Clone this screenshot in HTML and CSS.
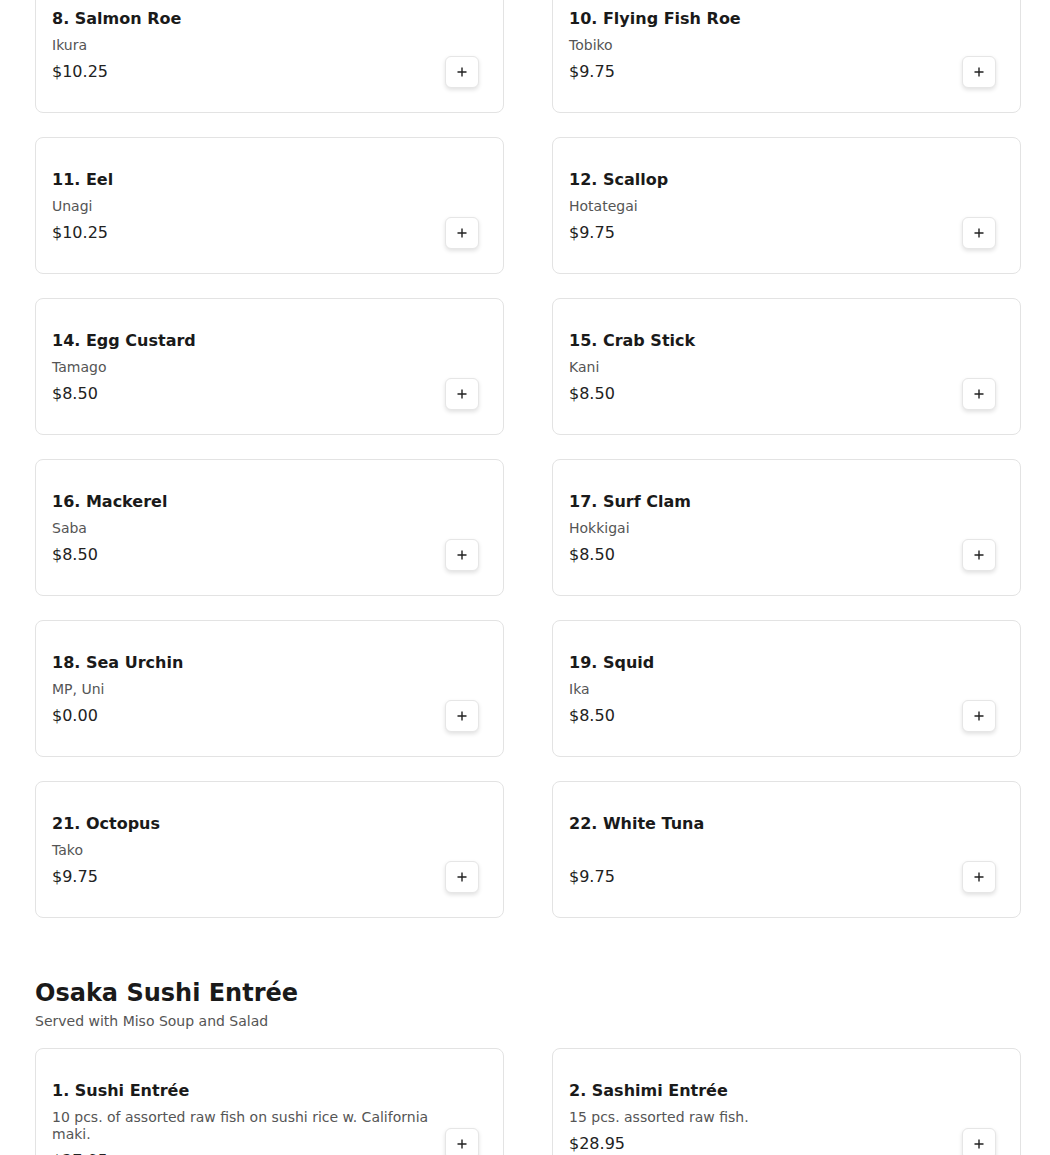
FILE: index.html
```html
<!DOCTYPE html>
<html lang="en">
<head>
<meta charset="utf-8">
<title>Menu</title>
<link rel="stylesheet" href="styles.css">
</head>
<body>
<main class="menu">
  <section class="section section-first">
    <div class="grid">
      <div class="card"><div class="info"><h3 class="name">8. Salmon Roe</h3><p class="desc">Ikura</p><p class="price">$10.25</p></div><button class="add" aria-label="Add"><svg viewBox="0 0 12 12" width="12" height="12"><path d="M6 1.5v9M1.5 6h9" stroke="#222" stroke-width="1.4"/></svg></button></div>
      <div class="card"><div class="info"><h3 class="name">10. Flying Fish Roe</h3><p class="desc">Tobiko</p><p class="price">$9.75</p></div><button class="add" aria-label="Add"><svg viewBox="0 0 12 12" width="12" height="12"><path d="M6 1.5v9M1.5 6h9" stroke="#222" stroke-width="1.4"/></svg></button></div>
      <div class="card"><div class="info"><h3 class="name">11. Eel</h3><p class="desc">Unagi</p><p class="price">$10.25</p></div><button class="add" aria-label="Add"><svg viewBox="0 0 12 12" width="12" height="12"><path d="M6 1.5v9M1.5 6h9" stroke="#222" stroke-width="1.4"/></svg></button></div>
      <div class="card"><div class="info"><h3 class="name">12. Scallop</h3><p class="desc">Hotategai</p><p class="price">$9.75</p></div><button class="add" aria-label="Add"><svg viewBox="0 0 12 12" width="12" height="12"><path d="M6 1.5v9M1.5 6h9" stroke="#222" stroke-width="1.4"/></svg></button></div>
      <div class="card"><div class="info"><h3 class="name">14. Egg Custard</h3><p class="desc">Tamago</p><p class="price">$8.50</p></div><button class="add" aria-label="Add"><svg viewBox="0 0 12 12" width="12" height="12"><path d="M6 1.5v9M1.5 6h9" stroke="#222" stroke-width="1.4"/></svg></button></div>
      <div class="card"><div class="info"><h3 class="name">15. Crab Stick</h3><p class="desc">Kani</p><p class="price">$8.50</p></div><button class="add" aria-label="Add"><svg viewBox="0 0 12 12" width="12" height="12"><path d="M6 1.5v9M1.5 6h9" stroke="#222" stroke-width="1.4"/></svg></button></div>
      <div class="card"><div class="info"><h3 class="name">16. Mackerel</h3><p class="desc">Saba</p><p class="price">$8.50</p></div><button class="add" aria-label="Add"><svg viewBox="0 0 12 12" width="12" height="12"><path d="M6 1.5v9M1.5 6h9" stroke="#222" stroke-width="1.4"/></svg></button></div>
      <div class="card"><div class="info"><h3 class="name">17. Surf Clam</h3><p class="desc">Hokkigai</p><p class="price">$8.50</p></div><button class="add" aria-label="Add"><svg viewBox="0 0 12 12" width="12" height="12"><path d="M6 1.5v9M1.5 6h9" stroke="#222" stroke-width="1.4"/></svg></button></div>
      <div class="card"><div class="info"><h3 class="name">18. Sea Urchin</h3><p class="desc">MP, Uni</p><p class="price">$0.00</p></div><button class="add" aria-label="Add"><svg viewBox="0 0 12 12" width="12" height="12"><path d="M6 1.5v9M1.5 6h9" stroke="#222" stroke-width="1.4"/></svg></button></div>
      <div class="card"><div class="info"><h3 class="name">19. Squid</h3><p class="desc">Ika</p><p class="price">$8.50</p></div><button class="add" aria-label="Add"><svg viewBox="0 0 12 12" width="12" height="12"><path d="M6 1.5v9M1.5 6h9" stroke="#222" stroke-width="1.4"/></svg></button></div>
      <div class="card"><div class="info"><h3 class="name">21. Octopus</h3><p class="desc">Tako</p><p class="price">$9.75</p></div><button class="add" aria-label="Add"><svg viewBox="0 0 12 12" width="12" height="12"><path d="M6 1.5v9M1.5 6h9" stroke="#222" stroke-width="1.4"/></svg></button></div>
      <div class="card"><div class="info"><h3 class="name">22. White Tuna</h3><p class="desc"></p><p class="price">$9.75</p></div><button class="add" aria-label="Add"><svg viewBox="0 0 12 12" width="12" height="12"><path d="M6 1.5v9M1.5 6h9" stroke="#222" stroke-width="1.4"/></svg></button></div>
    </div>
  </section>
  <section class="section">
    <h2 class="section-title">Osaka Sushi Entrée</h2>
    <p class="section-sub">Served with Miso Soup and Salad</p>
    <div class="grid">
      <div class="card"><div class="info"><h3 class="name">1. Sushi Entrée</h3><p class="desc">10 pcs. of assorted raw fish on sushi rice w. California maki.</p><p class="price">$27.95</p></div><button class="add" aria-label="Add"><svg viewBox="0 0 12 12" width="12" height="12"><path d="M6 1.5v9M1.5 6h9" stroke="#222" stroke-width="1.4"/></svg></button></div>
      <div class="card"><div class="info"><h3 class="name">2. Sashimi Entrée</h3><p class="desc">15 pcs. assorted raw fish.</p><p class="price">$28.95</p></div><button class="add" aria-label="Add"><svg viewBox="0 0 12 12" width="12" height="12"><path d="M6 1.5v9M1.5 6h9" stroke="#222" stroke-width="1.4"/></svg></button></div>
    </div>
  </section>
</main>
</body>
</html>
```
FILE: styles.css
```css
html, body {
  margin: 0;
  padding: 0;
  background: #ffffff;
}
body {
  font-family: "DejaVu Sans", "Liberation Sans", sans-serif;
  color: #1a1a1a;
  overflow: hidden;
}
.menu {
  width: 986px;
  margin: -24px 0 0 35px;
}
.section {
  margin-top: 61px;
}
.section-first {
  margin-top: 0;
}
.grid {
  display: grid;
  grid-template-columns: 469px 469px;
  column-gap: 48px;
  row-gap: 24px;
}
.section-title {
  margin: 0;
  font-size: 24px;
  line-height: 29px;
  font-weight: bold;
  color: #1a1a1a;
}
.section-sub {
  margin: 5px 0 18px;
  font-size: 14px;
  line-height: 17px;
  color: #555555;
}
.card {
  box-sizing: border-box;
  border: 1px solid #e3e3e3;
  border-radius: 8px;
  padding: 32px 24px 22px 16px;
  display: flex;
  align-items: flex-start;
  gap: 16px;
  background: #fff;
}
.info {
  flex: 1;
  min-width: 0;
  padding-bottom: 8px;
}
.name {
  margin: 0;
  font-size: 16px;
  line-height: 20px;
  font-weight: bold;
  color: #1a1a1a;
}
.desc {
  margin: 8px 0 0;
  font-size: 14px;
  line-height: 17px;
  min-height: 17px;
  color: #555555;
}
.price {
  margin: 8px 0 0;
  font-size: 16px;
  line-height: 20px;
  color: #222222;
}
.add {
  flex: none;
  margin-top: 47px;
  width: 34px;
  height: 32px;
  padding: 0;
  border: 1px solid #e6e6e6;
  border-radius: 6px;
  background: #fff;
  box-shadow: 0 2px 4px rgba(0, 0, 0, 0.12);
  display: flex;
  align-items: center;
  justify-content: center;
  cursor: pointer;
}
.add svg {
  display: block;
}
```
